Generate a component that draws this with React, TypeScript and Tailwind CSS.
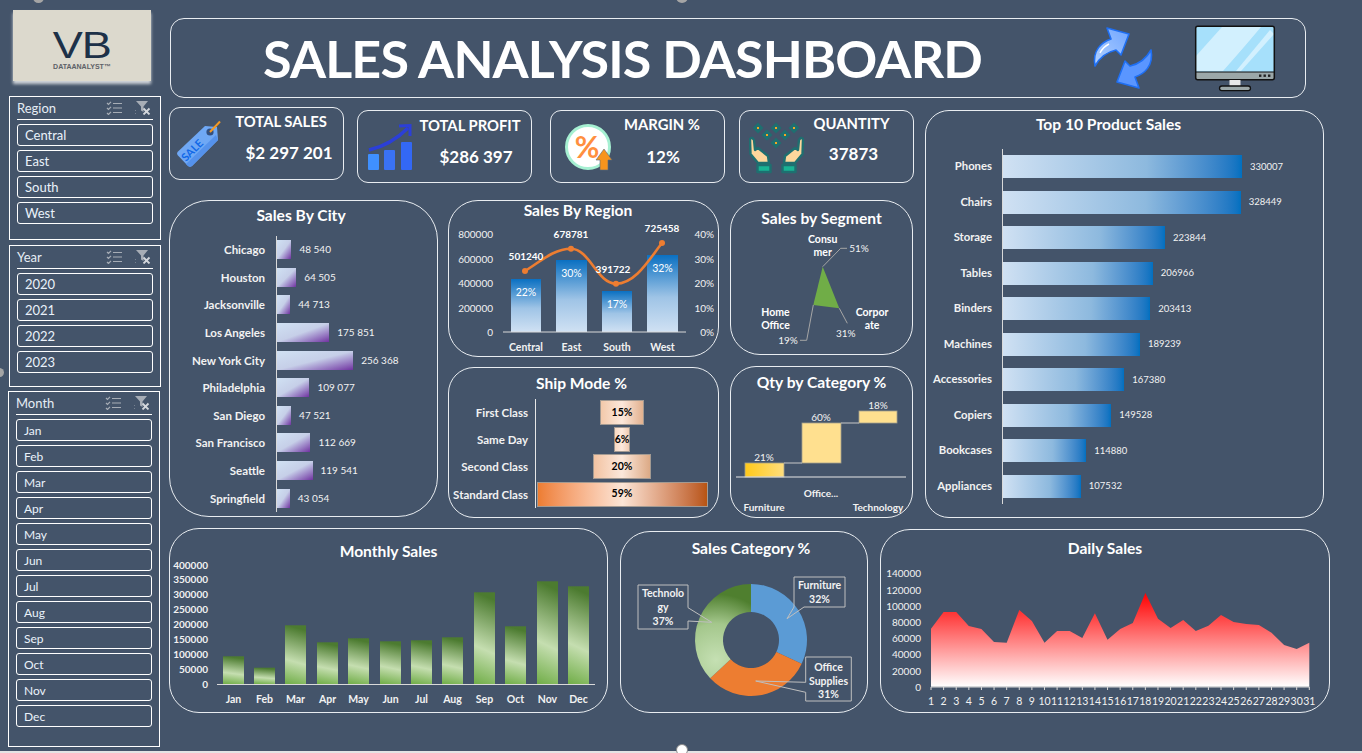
import React from "react";

const cities = [
  ["Chicago", 48540, "48 540"],
  ["Houston", 64505, "64 505"],
  ["Jacksonville", 44713, "44 713"],
  ["Los Angeles", 175851, "175 851"],
  ["New York City", 256368, "256 368"],
  ["Philadelphia", 109077, "109 077"],
  ["San Diego", 47521, "47 521"],
  ["San Francisco", 112669, "112 669"],
  ["Seattle", 119541, "119 541"],
  ["Springfield", 43054, "43 054"],
] as const;

const products = [
  ["Phones", 330007],
  ["Chairs", 328449],
  ["Storage", 223844],
  ["Tables", 206966],
  ["Binders", 203413],
  ["Machines", 189239],
  ["Accessories", 167380],
  ["Copiers", 149528],
  ["Bookcases", 114880],
  ["Appliances", 107532],
] as const;

const months = ["Jan", "Feb", "Mar", "Apr", "May", "Jun", "Jul", "Aug", "Sep", "Oct", "Nov", "Dec"];
const monthLeft = [223, 254, 285, 317, 348, 380, 411, 442, 474, 505, 537, 568];
const monthHeight = [27.7, 16.3, 58.7, 41.7, 45.7, 42.7, 43.7, 46.7, 91.7, 57.7, 102.7, 97.7];

// tops of the daily area, read off the picture
const daily = [311, 261, 261, 303, 312, 351, 353, 255, 288, 353, 318, 318, 339, 265, 344, 312, 294, 204, 281, 309, 285, 318, 302, 270, 291, 297, 300, 323, 360, 372, 353];
const dayX = (i: number) => 931 + i * 12.61;
const dailyPath =
  "M931,686.7 " + daily.map((z, i) => `L${dayX(i).toFixed(1)},${(525 + z / 3).toFixed(1)}`).join(" ") + " L1309.3,686.7 Z";

const ListIcon = () => (
  <svg viewBox="0 0 16 14" className="w-[16px] h-[14px]" fill="none" stroke="#a7adb6" strokeWidth="1.2">
    <path d="M1 2l1.5 1.5L5 .8M1 7l1.5 1.5L5 5.8M1 12l1.5 1.5L5 10.8" />
    <path d="M7 2.5h9M7 7h9M7 11.5h9" />
  </svg>
);

const ClearFilterIcon = () => (
  <svg viewBox="0 0 16 14" className="w-[16px] h-[14px]">
    <path d="M1 0h12L8.5 5.5V11L6 9.5V5.5z" fill="#a7adb6" />
    <path d="M8.5 7.5l6 6M14.5 7.5l-6 6" stroke="#d4d7dc" strokeWidth="1.8" />
    <path d="M0 9v1M0 12v1" stroke="#a7adb6" />
  </svg>
);

const Slicer = ({ title, items, className, itemText }: { title: string; items: string[]; className: string; itemText: string }) => (
  <section className={`w-[152px] border border-white px-[7px] ${className}`}>
    <div className="h-[23px] flex items-center border-b border-white">
      <span className="pt-[2px] text-[13px] text-[#e6edf5]">{title}</span>
      <span className="ml-auto mr-[2px] flex gap-[13px]">
        <ListIcon />
        <ClearFilterIcon />
      </span>
    </div>
    <ul className="mt-[4px] flex flex-col gap-[4px]">
      {items.map((item) => (
        <li key={item} className={`h-[22px] flex items-center pl-[7px] pt-[2px] border border-white rounded-[3px] text-[#eaf2fb] ${itemText}`}>
          {item}
        </li>
      ))}
    </ul>
  </section>
);

const Panel = ({ title, className, titleClass, children }: { title: string; className: string; titleClass: string; children: React.ReactNode }) => (
  <section className={`shrink-0 border border-[#e9edf1] ${className}`}>
    <h2 className={`text-center font-bold text-white text-[15.6px] leading-[18px] ${titleClass}`}>{title}</h2>
    {children}
  </section>
);

const Kpi = ({ label, value, icon, className, labelClass, valueClass }: { label: string; value: string; icon: React.ReactNode; className: string; labelClass: string; valueClass: string }) => (
  <div className={`w-[175px] h-[73px] shrink-0 flex items-center border border-[#e9edf1] rounded-[11px] ${className}`}>
    {icon}
    <div className="flex-1 font-bold text-white text-center">
      <div className={`text-[14.8px] leading-[18px] ${labelClass}`}>{label}</div>
      <div className={`text-[17px] leading-[22px] ${valueClass}`}>{value}</div>
    </div>
  </div>
);

const SaleTag = () => (
  <svg viewBox="175 117 50 50" className="w-[50px] h-[50px] ml-[5px] shrink-0">
    <path d="M177.5,150 L205,124 L217,125 L218,138 L192,164 Q190,165.5 188,164 L177.5,153 Q176.5,151.5 177.5,150Z" fill="#6fa8f5" />
    <path d="M218,138 L192,164 Q190,165.5 188,164 L186,162 L216,133Z" fill="#5592ec" />
    <circle cx="210" cy="130" r="3.6" fill="#34507f" />
    <path d="M210,130 L220,119.5" stroke="#f59a23" strokeWidth="2" />
    <text x="195" y="151" transform="rotate(-45 195 151)" textAnchor="middle" className="fill-[#1168e8] text-[11px] font-bold">SALE</text>
  </svg>
);

const ProfitIcon = () => (
  <svg viewBox="365 122 50 50" className="w-[50px] h-[50px] ml-[7px] shrink-0">
    <rect x="368" y="154" width="11" height="16" rx="1" fill="#3f90ff" />
    <rect x="384" y="150" width="11" height="20" rx="1" fill="#3a72f5" />
    <rect x="401" y="142" width="11" height="28" rx="1" fill="#3368f5" />
    <path d="M369,150 Q391,145 408,128" fill="none" stroke="#2b3fd8" strokeWidth="3.4" />
    <path d="M399,126 L410,125.5 L410,136" fill="none" stroke="#2b3fd8" strokeWidth="3" />
  </svg>
);

const MarginIcon = () => (
  <svg viewBox="560 124 52 50" className="w-[52px] h-[50px] ml-[11px] shrink-0">
    <circle cx="586" cy="149" r="21.5" fill="#ffffff" stroke="#a6f0d2" strokeWidth="3" />
    <text x="585" y="160" textAnchor="middle" className="fill-[#ff8f3f] text-[30px] font-bold">%</text>
    <path d="M602,151 L610,162 L606,162 L606,172 L598,172 L598,162 L594,162Z" fill="#f7941d" stroke="#5a6a7a" strokeWidth="0.6" />
  </svg>
);

const QUANTITY_DOTS = [[758, 128], [776, 128], [794, 128], [767, 135], [785, 135], [776, 143]];

const QuantityIcon = () => (
  <svg viewBox="749 122 55 53" className="w-[55px] h-[53px] ml-[9px] mt-[4px] shrink-0">
    {QUANTITY_DOTS.map(([x, y]) => (
      <g key={`${x}-${y}`}>
        <path d={`M${x},${y - 5.5} l5.5,5.5 l-5.5,5.5 l-5.5,-5.5Z`} fill="#1f6f70" />
        <rect x={x - 1} y={y - 1} width="2" height="2" fill="#f5a623" />
      </g>
    ))}
    <g stroke="#1f6f70" strokeWidth="2.4" strokeLinejoin="round">
      <path d="M750,139 Q752,136.5 754,140 L755,150 L758,148 L768,156 L769,163 L758,163 L750.5,154Z" fill="#fdd79c" />
      <rect x="757.5" y="165" width="13" height="7" fill="#19b394" />
    </g>
    <g transform="translate(1553,0) scale(-1,1)" stroke="#1f6f70" strokeWidth="2.4" strokeLinejoin="round">
      <path d="M750,139 Q752,136.5 754,140 L755,150 L758,148 L768,156 L769,163 L758,163 L750.5,154Z" fill="#fdd79c" />
      <rect x="757.5" y="165" width="13" height="7" fill="#19b394" />
    </g>
  </svg>
);

const RefreshArrows = () => {
  const arrow = "M1096,64 C1093,48 1103,40 1112,37 L1108,26 L1130,32 L1122,53 L1117,48 C1108,50 1101,55 1096,64Z";
  return (
    <svg viewBox="1093 24 62 64" className="w-[62px] h-[64px] shrink-0">
      <defs>
        <linearGradient id="arrowFill" x1="0" y1="1" x2="1" y2="0">
          <stop offset="0" stopColor="#b3d2ff" />
          <stop offset="1" stopColor="#6ea4ff" />
        </linearGradient>
      </defs>
      <path d={arrow} fill="url(#arrowFill)" stroke="#1f6ff2" strokeWidth="1.6" strokeLinejoin="round" />
      <path d="M1101,51 Q1104,45 1110,42" fill="none" stroke="#ffffff" strokeWidth="1.4" />
      <path d={arrow} transform="rotate(180 1124 56)" fill="#5a96ff" stroke="#1f6ff2" strokeWidth="1.6" strokeLinejoin="round" />
    </svg>
  );
};

const Monitor = () => (
  <svg viewBox="1194 27 82 67" className="w-[82px] h-[67px] ml-[40px] shrink-0">
    <rect x="1195.7" y="28.2" width="78.6" height="53.5" rx="2" fill="#a6e0fb" />
    <polygon points="1222,29 1262,29 1223,73 1196,73 1196,58" fill="#d2f0fe" />
    <polygon points="1261,29 1266,29 1232,73 1224,73" fill="#a6e0fb" />
    <polygon points="1270,32 1274,36 1241,73 1236,73" fill="#d2f0fe" />
    <rect x="1196" y="74" width="78" height="7.5" fill="#9ba7a8" />
    <rect x="1195.7" y="28.2" width="78.6" height="53.5" rx="2" fill="none" stroke="#111" strokeWidth="1.5" />
    <path d="M1196,74 H1274" stroke="#111" />
    <rect x="1259" y="76.5" width="2.4" height="2.4" fill="#222" />
    <rect x="1263.5" y="76.5" width="2.4" height="2.4" fill="#222" />
    <rect x="1268" y="76.5" width="2.4" height="2.4" fill="#222" />
    <rect x="1229.5" y="82" width="11" height="6" fill="#e8e8e8" />
    <rect x="1219.5" y="88" width="31" height="4.6" rx="2.3" fill="#9ba7a8" stroke="#111" strokeWidth="1.3" />
  </svg>
);

const RegionChart = () => {
  const bars = [
    { x: 511, w: 30, top: 279, pct: "22%", name: "Central", cx: 526 },
    { x: 556, w: 31, top: 260, pct: "30%", name: "East", cx: 571.5 },
    { x: 602, w: 30, top: 291, pct: "17%", name: "South", cx: 617 },
    { x: 647, w: 31, top: 255, pct: "32%", name: "West", cx: 662.5 },
  ];
  return (
    <svg viewBox="449 221 269 135" className="w-[269px] h-[135px] block">
      <defs>
        <linearGradient id="regionBar" x1="0" y1="0" x2="0" y2="1">
          <stop offset="0" stopColor="#0a70c2" />
          <stop offset="0.55" stopColor="#9fc4e6" />
          <stop offset="1" stopColor="#d0e1f3" />
        </linearGradient>
      </defs>
      {["800000", "600000", "400000", "200000", "0"].map((t, i) => (
        <text key={t} x="493" y={234 + i * 24.5} textAnchor="end" dominantBaseline="central" className="fill-[#f2f2f2] text-[10px]">{t}</text>
      ))}
      {["40%", "30%", "20%", "10%", "0%"].map((t, i) => (
        <text key={t} x="714" y={234 + i * 24.5} textAnchor="end" dominantBaseline="central" className="fill-[#f2f2f2] text-[10px]">{t}</text>
      ))}
      {bars.map((b) => (
        <g key={b.name}>
          <rect x={b.x} y={b.top} width={b.w} height={332 - b.top} fill="url(#regionBar)" />
          <text x={b.cx} y={b.top + 13} textAnchor="middle" dominantBaseline="central" className="fill-white text-[10.5px]">{b.pct}</text>
          <text x={b.cx} y="347" textAnchor="middle" dominantBaseline="central" className="fill-[#f2f2f2] text-[10.5px] font-bold">{b.name}</text>
        </g>
      ))}
      <path d="M503,332 H686" stroke="#d9d9d9" />
      <path d="M525,271 C540,262 553,249 571,248.7 C590,249 597,283.7 616,283.7 C636,283.7 650,258 662,243" fill="none" stroke="#ed7d31" strokeWidth="2.6" />
      {[[525, 271], [571, 248.7], [616, 283.7], [662, 243]].map(([x, y]) => (
        <circle key={x} cx={x} cy={y} r="3" fill="#ed7d31" />
      ))}
      {[["501240", 526, 256], ["678781", 571, 234], ["391722", 613, 269], ["725458", 662, 228]].map(([t, x, y]) => (
        <text key={t} x={x} y={y} textAnchor="middle" dominantBaseline="central" className="fill-white text-[10px] font-bold">{t}</text>
      ))}
    </svg>
  );
};

const SegmentChart = () => (
  <svg viewBox="732 229 181 125" className="w-[181px] h-[125px] block">
    <polygon points="823.7,266.7 840.3,308.3 814.3,305" fill="#70ad47" />
    <g fill="none" stroke="#a6a6a6">
      <path d="M823.7,266.7 L841.7,248.3 H848" />
      <path d="M840.3,308.3 L848.3,323.3" />
      <path d="M814.3,305 L807.7,340.3 H801" />
    </g>
    <g className="fill-white text-[10.5px] font-bold" textAnchor="middle" dominantBaseline="central">
      <text x="823.7" y="238.7">Consu</text>
      <text x="823.7" y="251.7">mer</text>
      <text x="776.5" y="311.7">Home</text>
      <text x="776.5" y="324.7">Office</text>
      <text x="873" y="312">Corpor</text>
      <text x="873" y="324.7">ate</text>
    </g>
    <g className="fill-[#f2f2f2] text-[10px]" textAnchor="middle" dominantBaseline="central">
      <text x="860" y="248">51%</text>
      <text x="846.7" y="332.7">31%</text>
      <text x="789" y="340.3">19%</text>
    </g>
  </svg>
);

const CategoryQty = () => (
  <svg viewBox="731 394 181 122" className="w-[181px] h-[122px] block">
    <defs>
      <linearGradient id="qtyA" x1="0" y1="0" x2="1" y2="0">
        <stop offset="0" stopColor="#ffc91a" />
        <stop offset="1" stopColor="#ffde7d" />
      </linearGradient>
    </defs>
    <g stroke="#a5a08c" strokeWidth="0.8">
      <rect x="745" y="463" width="39" height="14" fill="url(#qtyA)" />
      <rect x="802" y="423" width="39" height="40" fill="#ffe08f" />
      <rect x="859" y="411" width="38" height="12" fill="#ffe08f" />
    </g>
    <path d="M784,463 H802 M841,423 H859" stroke="#c8c8c8" />
    <path d="M736,477 H906" stroke="#e6e6e6" />
    <g className="fill-[#f2f2f2] text-[10px]" textAnchor="middle" dominantBaseline="central">
      <text x="764" y="457">21%</text>
      <text x="821" y="417">60%</text>
      <text x="878" y="405">18%</text>
    </g>
    <g className="fill-[#f2f2f2] text-[10px] font-bold" textAnchor="middle" dominantBaseline="central">
      <text x="821" y="493">Office...</text>
      <text x="764" y="507">Furniture</text>
      <text x="878" y="507">Technology</text>
    </g>
  </svg>
);

const MonthlyChart = () => (
  <svg viewBox="170 556 437 156" className="w-[437px] h-[156px] block -mt-[4px]">
    <defs>
      <linearGradient id="monthBar" x1="0.1" y1="0" x2="0" y2="1">
        <stop offset="0" stopColor="#4c7b30" />
        <stop offset="0.58" stopColor="#c5deb0" />
        <stop offset="1" stopColor="#70ad47" />
      </linearGradient>
    </defs>
    {["400000", "350000", "300000", "250000", "200000", "150000", "100000", "50000", "0"].map((t, i) => (
      <text key={t} x="208" y={564.5 + i * 14.95} textAnchor="end" dominantBaseline="central" className="fill-[#f2f2f2] text-[10px] font-bold">{t}</text>
    ))}
    {months.map((m, i) => (
      <g key={m}>
        <rect x={monthLeft[i]} y={684 - monthHeight[i]} width="21" height={monthHeight[i]} fill="url(#monthBar)" />
        <text x={monthLeft[i] + 10.5} y="698.7" textAnchor="middle" dominantBaseline="central" className="fill-[#f2f2f2] text-[10.5px] font-bold">{m}</text>
      </g>
    ))}
    <path d="M217,684.5 H595" stroke="#d9d9d9" />
  </svg>
);

const arc = (from: number, to: number) => {
  const cx = 751;
  const cy = 640;
  const pt = (r: number, p: number) => {
    const a = p * 2 * Math.PI;
    return `${(cx + r * Math.sin(a)).toFixed(2)},${(cy - r * Math.cos(a)).toFixed(2)}`;
  };
  const large = to - from > 0.5 ? 1 : 0;
  return `M${pt(56, from)} A56,56 0 ${large} 1 ${pt(56, to)} L${pt(28, to)} A28,28 0 ${large} 0 ${pt(28, from)}Z`;
};

const DonutChart = () => (
  <svg viewBox="621 559 246 153" className="w-[246px] h-[153px] block">
    <defs>
      <radialGradient id="techFill" gradientUnits="userSpaceOnUse" cx="716" cy="660" r="66">
        <stop offset="0" stopColor="#c5e0b3" />
        <stop offset="0.55" stopColor="#a4c78c" />
        <stop offset="1" stopColor="#4f7f2f" />
      </radialGradient>
    </defs>
    <path d={arc(0, 0.32)} fill="#5b9bd5" />
    <path d={arc(0.32, 0.63)} fill="#ed7d31" />
    <path d={arc(0.63, 1)} fill="url(#techFill)" />
    <g fill="none" stroke="#bfbfbf" strokeLinejoin="miter">
      <path d="M794,577 H845 V607 H804 L787,618.7 L794,607Z" />
      <path d="M638,585 H688 V607.7 L711.7,622.3 L688,621 V629 H638Z" />
      <path d="M805.7,657 H851.3 V701 H805.7 V692.3 L755.7,681 L805.7,682.3Z" />
    </g>
    <g className="fill-[#f2f2f2] text-[10.5px] font-bold" textAnchor="middle" dominantBaseline="central">
      <text x="819.5" y="585">Furniture</text>
      <text x="819.5" y="599">32%</text>
      <text x="663" y="592.7">Technolo</text>
      <text x="663" y="606.7">gy</text>
      <text x="663" y="620.7">37%</text>
      <text x="828.5" y="666.7">Office</text>
      <text x="828.5" y="680.7">Supplies</text>
      <text x="828.5" y="694">31%</text>
    </g>
  </svg>
);

const DailyChart = () => (
  <svg viewBox="881 559 448 153" className="w-[448px] h-[153px] block">
    <defs>
      <linearGradient id="dailyFill" x1="0" y1="0" x2="0" y2="1">
        <stop offset="0" stopColor="#ff0000" />
        <stop offset="1" stopColor="#ffffff" />
      </linearGradient>
    </defs>
    {["140000", "120000", "100000", "80000", "60000", "40000", "20000", "0"].map((t, i) => (
      <text key={t} x="921" y={573.3 + i * 16.2} textAnchor="end" dominantBaseline="central" className="fill-[#f2f2f2] text-[10px]">{t}</text>
    ))}
    <path d={dailyPath} fill="url(#dailyFill)" />
    <path d="M931,687 H1309.3" stroke="#d9d9d9" />
    {daily.map((_, i) => (
      <g key={i}>
        <path d={`M${dayX(i)},687 v3`} stroke="#d9d9d9" />
        <text x={dayX(i)} y="700.7" textAnchor="middle" dominantBaseline="central" className="fill-[#f2f2f2] text-[10.5px]">{i + 1}</text>
      </g>
    ))}
  </svg>
);

const App = () => {
  return (
    <div className="relative flex w-[1362px] h-[753px] overflow-hidden bg-[#44546a] font-['Lato','Liberation_Sans',sans-serif]">
      {/* slicers */}
      <aside className="w-[169px] shrink-0 pt-[10px] pl-[9px]">
        <div className="ml-[4px] w-[138px] h-[71px] flex flex-col items-center justify-center bg-[#dcd9cd] shadow-[0_3px_3px_0_rgba(255,255,255,0.75)]">
          <span className="h-[29px] mt-[11px] text-[37px] leading-[29px] tracking-[-1px] text-[#1d3148] scale-x-[1.22] font-['Liberation_Sans',sans-serif]">VB</span>
          <span className="mt-[2px] text-[7px] leading-[9px] font-bold text-[#5d6167] font-['Liberation_Sans',sans-serif]">DATAANALYST™</span>
        </div>
        <Slicer title="Region" items={["Central", "East", "South", "West"]} className="mt-[15px] h-[144px]" itemText="text-[13px]" />
        <Slicer title="Year" items={["2020", "2021", "2022", "2023"]} className="mt-[5px] h-[142px]" itemText="text-[13px]" />
        <Slicer title="Month" items={months} className="mt-[4px] -ml-px h-[356px]" itemText="text-[12px]" />
      </aside>

      <main className="flex-1 pt-[18px]">
        {/* title bar */}
        <header className="ml-[1px] w-[1136px] h-[80px] flex items-center pl-[92px] pr-[29px] border border-[#e9edf1] rounded-[14px]">
          <h1 className="text-[52px] leading-none font-bold tracking-[-0.85px] text-white whitespace-nowrap">SALES ANALYSIS DASHBOARD</h1>
          <div className="ml-auto flex items-center">
            <RefreshArrows />
            <Monitor />
          </div>
        </header>

        <div className="flex mt-[9px]">
          <div className="w-[744px] shrink-0">
            {/* kpi cards */}
            <div className="flex h-[75px]">
              <Kpi label="TOTAL SALES" value="$2 297 201" icon={<SaleTag />} className="" labelClass="-ml-[6px] -mt-[12px]" valueClass="mt-[12px] ml-[10px]" />
              <Kpi label="TOTAL PROFIT" value="$286 397" icon={<ProfitIcon />} className="ml-[13px] mt-[3px]" labelClass="-ml-[6px] -mt-[10px]" valueClass="mt-[12px] ml-[6px]" />
              <Kpi label="MARGIN %" value="12%" icon={<MarginIcon />} className="ml-[18px] mt-[3px]" labelClass="-ml-[14px] -mt-[10px]" valueClass="mt-[13px] -ml-[12px]" />
              <Kpi label="QUANTITY" value="37873" icon={<QuantityIcon />} className="ml-[14px] mt-[3px]" labelClass="-ml-[14px] -mt-[15px]" valueClass="mt-[11px] -ml-[10px]" />
            </div>

            <div className="flex mt-[18px] h-[318px]">
              <Panel title="Sales By City" className="w-[269px] h-[317px] rounded-[40px]" titleClass="mt-[5px] pr-[5px]">
                <div className="mt-[12px]">
                  {cities.map(([name, value, text]) => (
                    <div key={name} className="flex items-center">
                      <span className="w-[95px] text-right text-[11.5px] font-bold text-[#f2f2f2]">{name}</span>
                      <div className="flex items-center h-[27.6px] ml-[11px] border-l border-[#d9d9d9]">
                        <div className="h-[19px] bg-gradient-to-br from-[#d0e1f3] via-[#c6cfe8] to-[#7030a0]" style={{ width: value * 0.000297 }} />
                        <span className="ml-[8px] text-[10px] text-[#f2f2f2]">{text}</span>
                      </div>
                    </div>
                  ))}
                </div>
              </Panel>

              <div className="ml-[10px] w-[271px] shrink-0">
                <Panel title="Sales By Region" className="w-[271px] h-[157px] rounded-[30px]" titleClass="h-[20px] pr-[11px]">
                  <RegionChart />
                </Panel>
                <Panel title="Ship Mode %" className="mt-[10px] w-[271px] h-[151px] rounded-[26px]" titleClass="mt-[6px] pr-[4px]">
                  <div className="mt-[7px]">
                    {[
                      { name: "First Class", pct: "15%", cls: "w-[44px] from-[#f3c9aa] via-[#fce8db] to-[#e2b18f]" },
                      { name: "Same Day", pct: "6%", cls: "w-[16px] from-[#f8d9c3] via-[#fde9dd] to-[#efcbb2]" },
                      { name: "Second Class", pct: "20%", cls: "w-[58px] from-[#f2c3a2] via-[#fce8db] to-[#dcaa86]" },
                      { name: "Standard Class", pct: "59%", cls: "w-[171px] from-[#ed7d31] via-[#fbe5d6] to-[#b85410]" },
                    ].map((row) => (
                      <div key={row.name} className="flex items-center">
                        <span className="w-[79px] text-right text-[11.5px] font-bold text-[#f2f2f2] whitespace-nowrap">{row.name}</span>
                        <div className="ml-[7px] w-[173px] h-[27.2px] flex items-center justify-center border-l border-[#e6e6e6]">
                          <div className={`h-[25px] flex items-center justify-center bg-gradient-to-r border border-[#a39a92] text-[10.5px] font-bold text-black ${row.cls}`}>{row.pct}</div>
                        </div>
                      </div>
                    ))}
                  </div>
                </Panel>
              </div>

              <div className="ml-[11px] w-[183px] shrink-0">
                <Panel title="Sales by Segment" className="w-[183px] h-[155px] rounded-[30px]" titleClass="mt-[8px] h-[20px]">
                  <SegmentChart />
                </Panel>
                <Panel title="Qty by Category %" className="mt-[11px] w-[183px] h-[152px] rounded-[26px]" titleClass="mt-[6px] h-[21px]">
                  <CategoryQty />
                </Panel>
              </div>
            </div>
          </div>

          <Panel title="Top 10 Product Sales" className="ml-[12px] mt-[3px] w-[399px] h-[408px] rounded-[24px]" titleClass="mt-[4px] pr-[32px]">
            <div className="mt-[16px]">
              {products.map(([name, value]) => (
                <div key={name} className="flex items-center">
                  <span className="w-[66px] text-right text-[11.3px] font-bold text-[#f2f2f2]">{name}</span>
                  <div className="flex items-center h-[35.5px] ml-[10px] border-l border-[#d9d9d9]">
                    <div className="h-[23px] bg-gradient-to-r from-[#d0e1f3] via-[#8db9de] via-60% to-[#0070c0]" style={{ width: value * 0.000724 }} />
                    <span className="ml-[8px] text-[9.5px] text-[#f2f2f2]">{value}</span>
                  </div>
                </div>
              ))}
            </div>
          </Panel>
        </div>

        {/* bottom row */}
        <div className="flex items-start mt-[10px]">
          <Panel title="Monthly Sales" className="w-[439px] h-[185px] rounded-[30px]" titleClass="pt-[13px]">
            <MonthlyChart />
          </Panel>
          <Panel title="Sales Category %" className="ml-[12px] mt-[3px] w-[248px] h-[182px] rounded-[30px]" titleClass="h-[27px] pt-[7px] pl-[14px]">
            <DonutChart />
          </Panel>
          <Panel title="Daily Sales" className="ml-[12px] mt-[1px] w-[450px] h-[184px] rounded-[30px]" titleClass="h-[29px] pt-[9px]">
            <DailyChart />
          </Panel>
        </div>
      </main>

      {/* window chrome along the edges */}
      <div className="absolute left-0 right-0 bottom-0 h-[2px] bg-[#e4e4e4]" />
      <div className="absolute left-[33px] -top-[8px] w-[11px] h-[11px] rounded-full bg-[#a5a5a5]" />
      <div className="absolute left-[676px] -top-[9px] w-[12px] h-[12px] rounded-full bg-[#a5a5a5]" />
      <div className="absolute left-[676px] bottom-[-3px] w-[12px] h-[12px] rounded-full bg-white border border-[#8a8a8a]" />
      <div className="absolute -left-[5px] top-[368px] w-[9px] h-[9px] rounded-full bg-[#a5a5a5]" />
    </div>
  );
};

export default App;
